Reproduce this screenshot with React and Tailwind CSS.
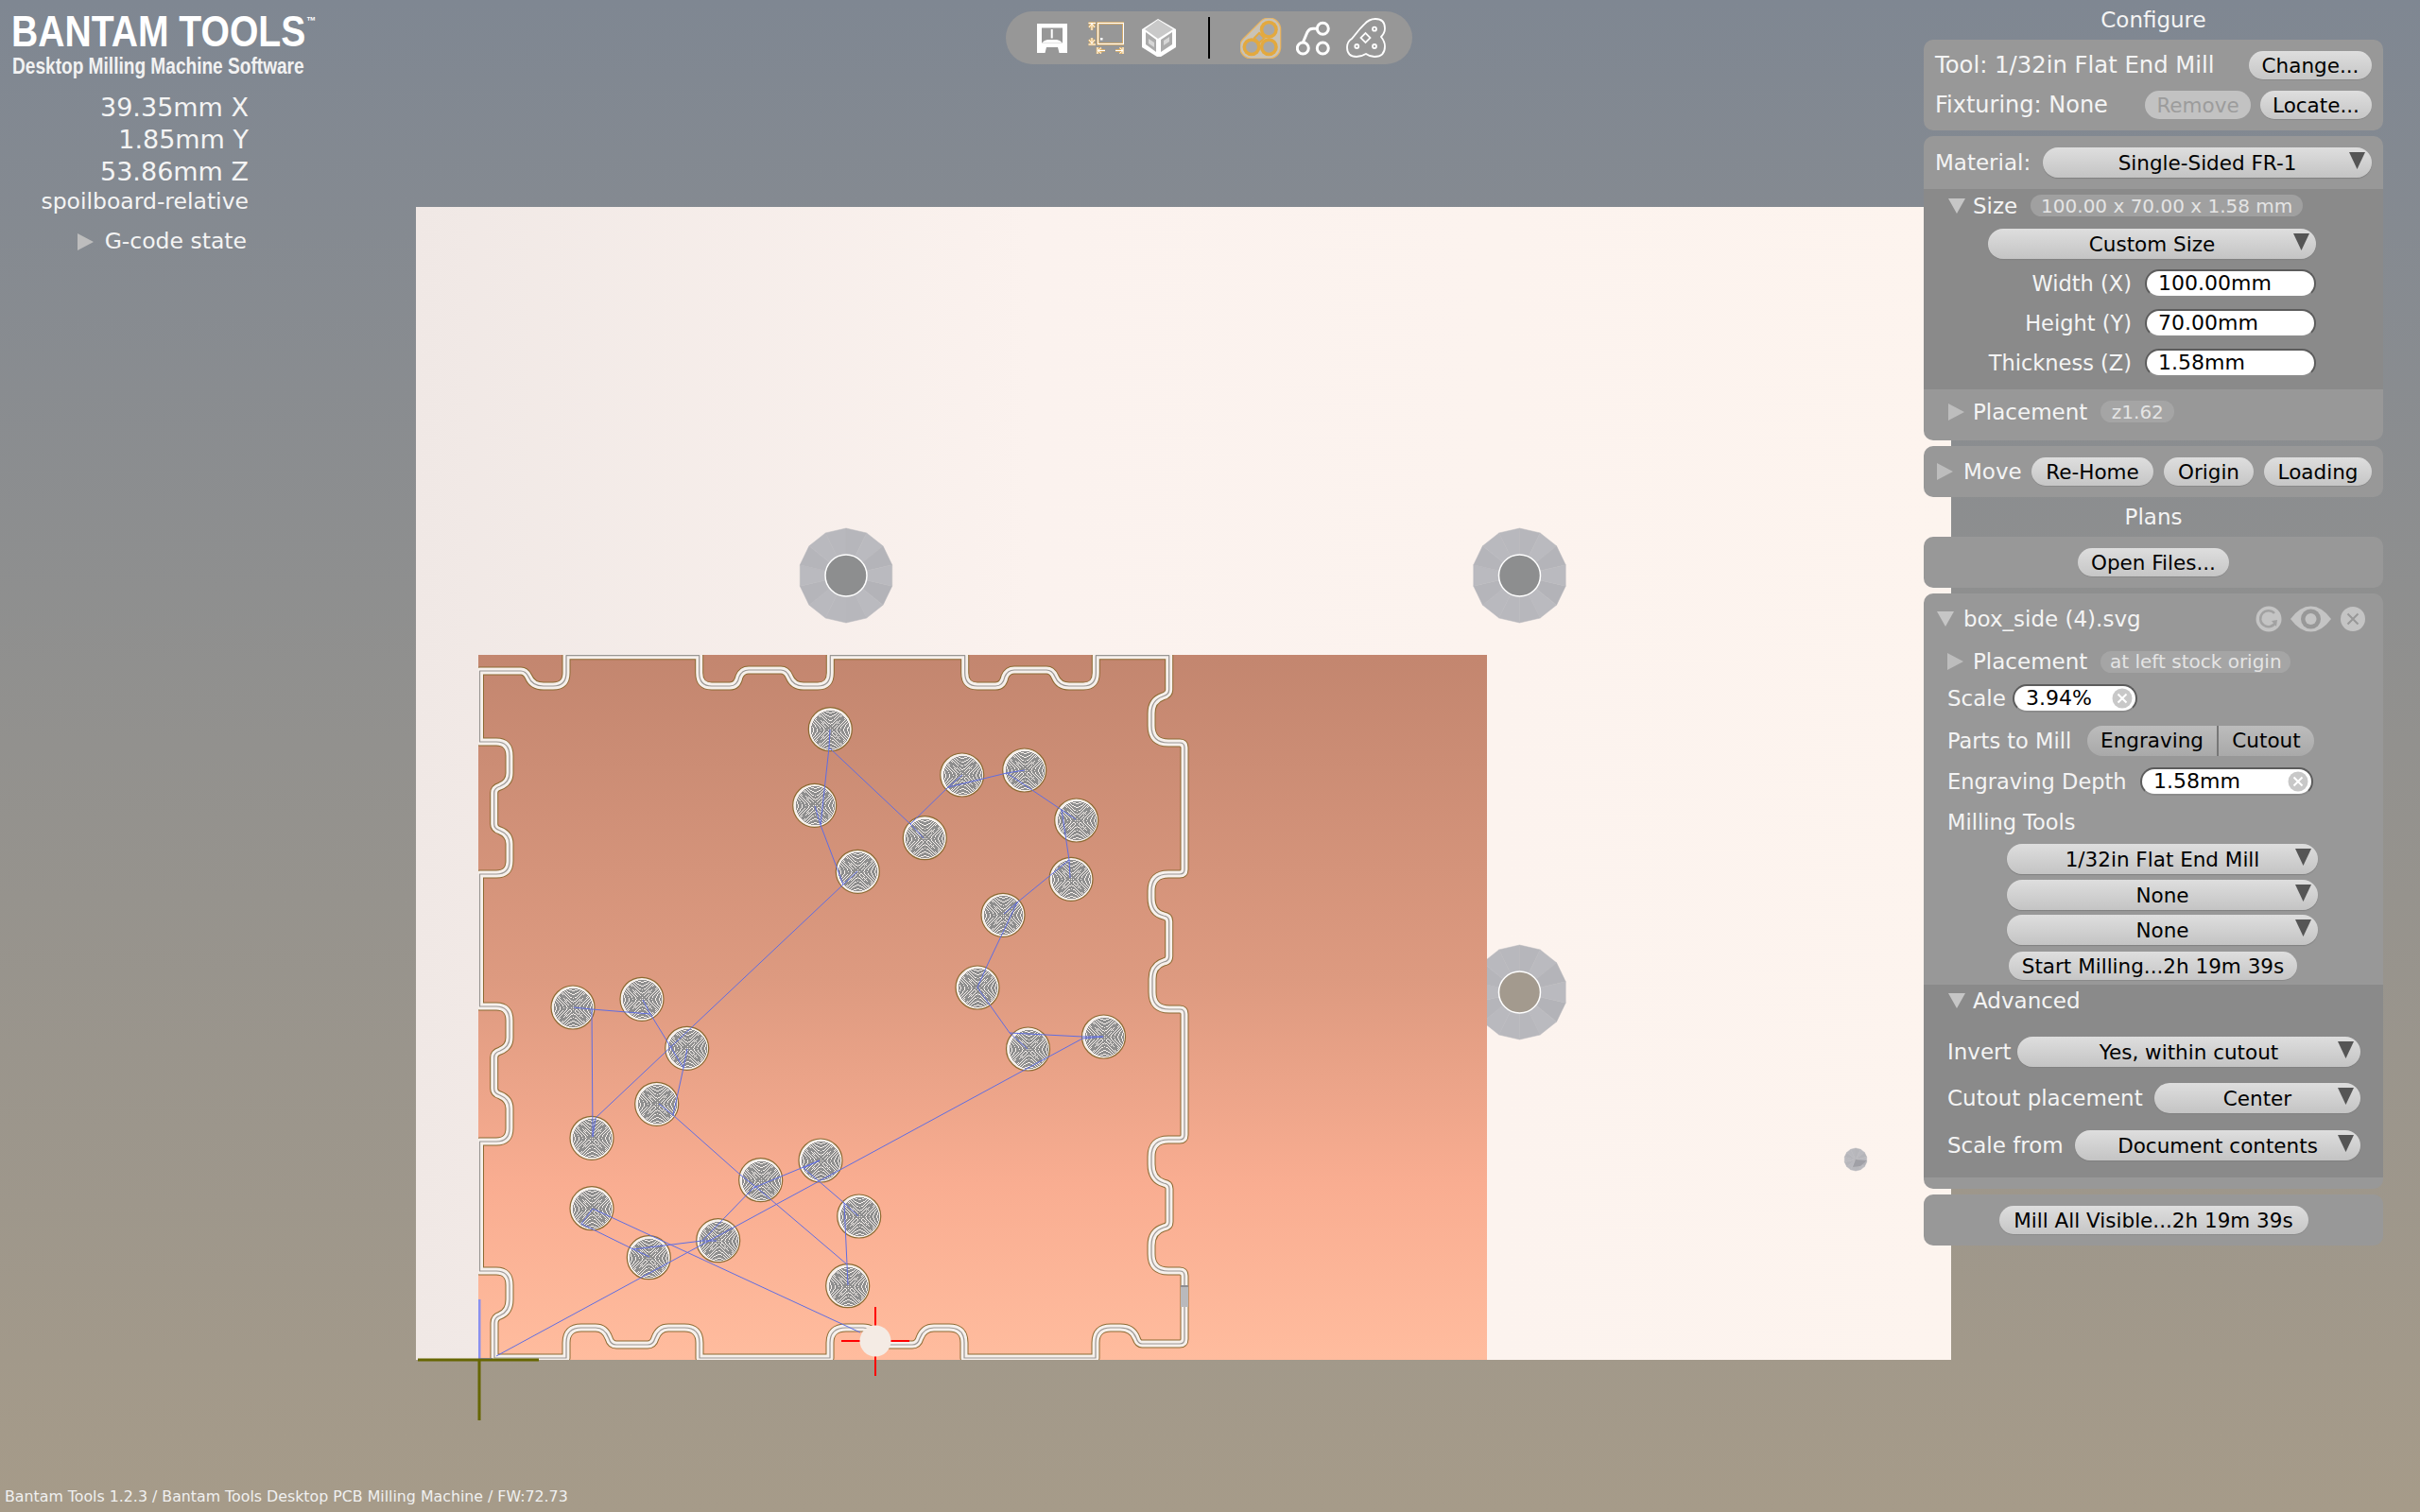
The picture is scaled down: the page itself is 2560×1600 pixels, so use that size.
const sans = "font-['DejaVu_Sans',sans-serif]";

const CUT_PATH =
  "M507.5 710 H551 Q556 710 559 716 Q563 726 575 726 H585 Q599 726 599 712 V693.7 H739.7 V712 Q739.7 726 753 726 H772 Q780 726 782 716 Q785 709 792 709 H826 Q832 709 835 716 Q839 726 850 726 H865 Q878.3 726 878.3 712 V693.7 H1020.7 V712 Q1020.7 726 1034 726 H1053 Q1061 726 1063 716 Q1066 709 1073 709 H1107 Q1113 709 1116 716 Q1120 726 1131 726 H1146 Q1159.3 726 1159.3 712 V693.7 H1236.7 V730 Q1236.7 735 1230 737 Q1218 741 1218 755 V768 Q1218 786 1236 786 H1248 Q1253 786 1253 791 V920 Q1253 925 1248 925 H1236 Q1218 925 1218 943 V950 Q1218 966 1231 969 Q1236.7 970 1236.7 975 V1012 Q1236.7 1017 1231 1018 Q1219 1022 1219 1036 V1050 Q1219 1068 1237 1068 H1248 Q1253 1068 1253 1073 V1201 Q1253 1206 1248 1206 H1236 Q1218 1206 1218 1224 V1232 Q1218 1248 1231 1252 Q1237 1253 1237 1258 V1293 Q1237 1298 1231 1299 Q1218 1303 1218 1318 V1327 Q1218 1345 1236 1345 H1248 Q1253 1345 1253 1350 V1417 Q1253 1422 1248 1422 H1208 Q1204 1422 1202 1416 Q1198 1405 1185 1405 H1175 Q1159 1405 1159 1421 V1437 H1020 V1421 Q1020 1405 1004 1405 H988 Q977 1405 973 1416 Q971 1423 965 1423 H936 Q930 1423 928 1416 Q924 1405 913 1405 H895 Q878 1405 878 1421 V1437 H740 V1421 Q740 1405 724 1405 H707 Q697 1405 693 1416 Q691 1423 685 1423 H652 Q646 1423 644 1416 Q640 1405 630 1405 H615 Q599 1405 599 1421 V1437 H523 V1400 Q523 1394 529 1392 Q539 1388 539 1375 V1360 Q539 1345 525 1345 H507.5 V1208 H525 Q539 1208 539 1194 V1173 Q539 1163 529 1159 Q522.7 1157 522.7 1152 V1119 Q522.7 1114 529 1112 Q539 1108 539 1098 V1080 Q539 1065 525 1065 H507.5 V925 H525 Q539 925 539 911 V893 Q539 883 529 879 Q522.7 877 522.7 872 V839 Q522.7 834 529 832 Q539 828 539 818 V800 Q539 785 525 785 H507.5 Z";

const HOLES = [
  [878.3, 771.7], [861.7, 852.3], [907.3, 922.3], [978.3, 886.7], [1017.7, 820], [1083.7, 815],
  [1138.7, 868], [1133, 930.3], [1061, 968.3], [1034, 1045], [1087.5, 1110], [1167.5, 1097],
  [606, 1066], [679, 1057.3], [726.7, 1109.3], [694.7, 1168.3], [626, 1204.3], [804.7, 1248.7],
  [868, 1228], [908.7, 1287], [896.7, 1360.7], [759.7, 1312.7], [686.3, 1330.7], [626, 1278.7],
];

// rapid moves between the holes
const TRAVEL = [
  "878,772 877,791 868,873 862,853",
  "877,791 963,872 977,887",
  "868,873 892,936 907,922",
  "892,936 630,1183 627,1203 626,1068 607,1066",
  "963,872 1003,833 1018,820",
  "1003,833 1065,818 1084,815",
  "1065,818 1123,857 1138,867",
  "1123,857 1131,910 1132,929",
  "1131,910 1076,955 1062,967",
  "1076,955 1045,1020 1034,1045",
  "1034,1045 1068,1093 1145,1097 1167,1097",
  "1068,1093 1087,1110",
  "525,1435 1145,1099 1167,1097",
  "626,1068 688,1073 680,1058",
  "688,1073 723,1130 727,1110",
  "723,1130 712,1180 697,1168",
  "712,1180 783,1243 802,1258 896,1338 897,1360",
  "896,1338 893,1273 908,1287",
  "893,1273 850,1236 867,1228 797,1257 743,1313 758,1313",
  "743,1313 670,1322 687,1330",
  "670,1322 615,1295 627,1279 910,1410",
];

const Bolt = ({ cx, cy, r, inner, hole }) => {
  const n = 14;
  const pts = Array.from({ length: n }, (_, i) => {
    const a = ((i + 0.5) / n) * Math.PI * 2;
    return [cx + Math.cos(a) * r, cy + Math.sin(a) * r];
  });
  return (
    <g>
      {pts.map((p, i) => {
        const q = pts[(i + 1) % n];
        const shade = 179 + Math.round(7 * Math.abs(Math.sin(i * 1.3)));
        return (
          <polygon
            key={i}
            points={`${cx},${cy} ${p[0]},${p[1]} ${q[0]},${q[1]}`}
            fill={`rgb(${shade},${shade},${shade + 5})`}
            stroke={`rgb(${shade},${shade},${shade + 5})`}
            strokeWidth="0.5"
          />
        );
      })}
      {inner && <circle cx={cx} cy={cy} r={inner} fill={hole} stroke="#fff" strokeWidth="1.5" />}
    </g>
  );
};

const Hole = ({ cx, cy }) => {
  const rings = [];
  for (let r = 20; r > 1; r -= 4 / 3) rings.push(r);
  const x = Math.round(cx) + 0.5;
  const y = Math.round(cy) + 0.5;
  return (
    <g>
      <circle cx={cx} cy={cy} r="23" fill="#f6f0ec" stroke="#8c6a32" strokeWidth="1.2" />
      {rings.map((r) => (
        <circle key={r} cx={x} cy={y} r={r} fill="none" stroke="#8e8e8e" strokeWidth="1" shapeRendering="crispEdges" />
      ))}
    </g>
  );
};

const Viewport = () => (
  <svg className="absolute inset-0" width="2560" height="1600" viewBox="0 0 2560 1600">
    <defs>
      <linearGradient id="board" x1="0" y1="0" x2="1" y2="0">
        <stop offset="0" stopColor="#f0e8e5" />
        <stop offset="0.4" stopColor="#fbf2ee" />
        <stop offset="1" stopColor="#fdf4ee" />
      </linearGradient>
      <linearGradient id="copper" x1="0" y1="0" x2="0" y2="1">
        <stop offset="0" stopColor="#c3866f" />
        <stop offset="0.46" stopColor="#dd9a80" />
        <stop offset="0.75" stopColor="#f9ad91" />
        <stop offset="1" stopColor="#ffbc9e" />
      </linearGradient>
      <clipPath id="stock">
        <rect x="506" y="693" width="1067" height="746" />
      </clipPath>
    </defs>
    <rect x="440" y="219" width="1624" height="1220" fill="url(#board)" />
    <Bolt cx={895} cy={609} r={50} inner={22} hole="#8d8e8f" />
    <Bolt cx={1607.5} cy={609} r={50} inner={22} hole="#8d8e8f" />
    <Bolt cx={1607.5} cy={1050} r={50} inner={22} hole="#a39a8e" />
    <Bolt cx={1963} cy={1227} r={12} />
    <polygon points="1963,1227 1975,1228 1968,1234 1960,1235" fill="#a0a0a6" />
    <rect x="506" y="693" width="1067" height="746" fill="url(#copper)" />
    <g clipPath="url(#stock)" fill="none" strokeLinejoin="round">
      <path d={CUT_PATH} stroke="#8c6a32" strokeWidth="9" />
      <path d={CUT_PATH} stroke="#f6f0ec" strokeWidth="7" />
      <path d={CUT_PATH} stroke="#999693" strokeWidth="1.2" />
    </g>
    <rect x="1249" y="1360" width="8" height="23" fill="#b9b9bc" />
    <rect x="1249" y="1360" width="8" height="2" fill="#8e8e92" />
    {HOLES.map(([cx, cy]) => (
      <Hole key={`${cx}-${cy}`} cx={cx} cy={cy} />
    ))}
    <g fill="none" stroke="#5f6de2" strokeWidth="1">
      {TRAVEL.map((p) => (
        <polyline key={p} points={p} />
      ))}
    </g>
    <rect x="506" y="1375" width="2.5" height="63" fill="#8b91ee" />
    <rect x="507" y="1437" width="14" height="1" fill="#8b91ee" />
    <rect x="442" y="1437.5" width="128" height="3" fill="#666600" />
    <rect x="505.5" y="1439" width="3" height="64" fill="#666600" />
    <rect x="925" y="1383" width="2" height="73" fill="#ff0000" />
    <rect x="890" y="1418" width="72" height="2" fill="#ff0000" />
    <circle cx="926" cy="1419" r="16.5" fill="#f4ebe4" />
  </svg>
);

const TriDown = ({ className = "" }) => (
  <svg className={className} width="18" height="16" viewBox="0 0 18 16">
    <polygon points="0,0 18,0 9,16" fill="#c6c6c6" />
  </svg>
);

const TriRight = ({ className = "" }) => (
  <svg className={className} width="17" height="18" viewBox="0 0 17 18">
    <polygon points="0,0 17,9 0,18" fill="#bdbdbd" />
  </svg>
);

const Btn = ({ className = "", muted, children }) => (
  <div
    className={`flex h-[30px] items-center justify-center rounded-full pt-[1px] text-[21.5px] ${
      muted
        ? "bg-[#c2c2c2] text-[#9c9c9c]"
        : "bg-gradient-to-b from-[#dedede] to-[#c6c6c6] text-black shadow-[0_1px_0_#8a8a8a]"
    } ${className}`}
  >
    {children}
  </div>
);

const Drop = ({ className = "", children }) => (
  <div className={`relative flex h-[32px] items-center justify-center rounded-full bg-gradient-to-b from-[#dedede] to-[#c4c4c4] pt-[1px] text-[21.5px] text-black shadow-[0_1px_1px_#808080] ${className}`}>
    {children}
    <svg className="absolute right-[7px] top-[5px]" width="17" height="18" viewBox="0 0 17 18">
      <polygon points="0,0 17,0 8.5,18" fill="#555555" />
    </svg>
  </div>
);

const ClearX = ({ className = "" }) => (
  <svg className={className} width="22" height="22" viewBox="0 0 22 22">
    <circle cx="11" cy="11" r="10.5" fill="#c8c8c8" />
    <path d="M6.5 6.5 L15.5 15.5 M15.5 6.5 L6.5 15.5" stroke="#ffffff" strokeWidth="2" />
  </svg>
);

const Field = ({ className = "", clear, children }) => (
  <div className={`relative flex h-[30px] items-center rounded-full border-2 border-[#5c5c5c] border-b-[#8c8c8c] bg-white pl-[12px] text-[22px] text-black ${className}`}>
    {children}
    {clear && <ClearX className="absolute right-[3px] top-[2px]" />}
  </div>
);

const Pill = ({ className = "", children }) => (
  <div className={`flex h-[23px] items-center justify-center rounded-full text-[20px] text-[#e4e4e4] ${className}`}>
    {children}
  </div>
);

const Panel = ({ className = "", children }) => (
  <div className={`overflow-hidden rounded-[10px] bg-[#989898] ${className}`}>{children}</div>
);

const Toolbar = () => (
  <div className="mt-[12px] flex h-[56px] w-[430px] items-center rounded-full bg-[#979797]">
    <svg className="ml-[33px]" width="32" height="31" viewBox="0 0 32 31">
      <rect width="32" height="31" fill="#fff" />
      <rect x="5" y="4.5" width="22" height="16" fill="#979797" />
      <rect x="14.7" y="6" width="2" height="9.5" fill="#fff" />
      <path d="M8.5 31 L10 25 H22 L23.5 31 Z" fill="#979797" />
      <path d="M5 20.5 Q8 17 11 17 H21 Q24 17 27 20.5 Z" fill="#fff" />
    </svg>
    <svg className="ml-[22px]" width="38" height="34" viewBox="0 0 38 34" fill="none">
      {[["#e6b566", 2.6], ["#ffffff", 1]].map(([c, w]) => (
        <g key={c} stroke={c} strokeWidth={w}>
          <rect x="10.5" y="1.5" width="27" height="22" />
          <path d="M0.5 1.5 H8 M4 2 V9 M1 6 L4 2 L7 6 M4 17 V23 M1 19 L4 23 L7 19 M0.5 24 H8" />
          <path d="M10 27 V34 M37 27 V34 M10.5 30.5 H18 M10.5 30.5 L14 27.5 M10.5 30.5 L14 33.5 M29 30.5 H37 M37 30.5 L33.5 27.5 M37 30.5 L33.5 33.5" />
        </g>
      ))}
      <rect x="13" y="17" width="2.5" height="2.5" fill="#fff" />
    </svg>
    <svg className="ml-[19px]" width="36" height="42" viewBox="0 0 36 42">
      <polygon points="17,1 36,12 36,31 20,41 16,41 0,31 0,12" fill="#fff" />
      <polygon points="17,2 33,12 17,22 3,12" fill="#c9c9c9" />
      <polygon points="4,15 15,23 15,36 4,28" fill="#ababab" />
      <polygon points="32,15 20,23 20,36 32,28" fill="#ababab" />
      <polygon points="7,22 13,26 13,31 7,27" fill="#d6d6d6" />
      <polygon points="29,20 23,24 23,29 29,25" fill="#d6d6d6" />
    </svg>
    <div className="ml-[34px] h-[44px] w-[2px] bg-black" />
    <svg className="ml-[32px]" width="44" height="43" viewBox="0 0 44 43">
      <path d="M30.3 12.3 L12 30.7 H30.3 Z" fill="#e7b35f" stroke="#e7b35f" strokeWidth="26" strokeLinejoin="round" />
      <path d="M30.3 12.3 L12 30.7 H30.3 Z" fill="#c9c3b7" stroke="#c9c3b7" strokeWidth="23.5" strokeLinejoin="round" />
      {[[30.3, 12.3], [12, 30.7], [30.3, 30.7]].map(([x, y]) => (
        <g key={x + y}>
          <circle cx={x} cy={y} r="9.5" fill="#e3a93f" />
          <circle cx={x} cy={y} r="6" fill="#a8a8a8" />
        </g>
      ))}
      <rect x="16.5" y="17.5" width="7.5" height="7.5" transform="rotate(45 20.3 21)" fill="#adadad" stroke="#e3a93f" strokeWidth="2" />
    </svg>
    <svg className="ml-[15px]" width="36" height="37" viewBox="0 0 36 37" fill="none" stroke="#fff" strokeWidth="3">
      <circle cx="28.3" cy="8.3" r="6" />
      <circle cx="7.3" cy="29" r="6" />
      <circle cx="28.3" cy="29" r="6" />
      <path d="M22 8.3 H18 Q14 8.3 12 12 L7.3 23" />
    </svg>
    <svg className="ml-[17px]" width="42" height="42" viewBox="0 0 42 42" fill="none" stroke="#fff" strokeWidth="1.8">
      <path d="M11 41 Q1 41 1 31 Q1 25 6 22 L15 11 Q17 9 19 7 Q24 1 31 1 Q41 1 41 11 Q41 16 37 20 Q41 25 41 30 Q41 41 30 41 Q25 41 21 38 Q16 41 11 41 Z" />
      <circle cx="30" cy="11.7" r="2" />
      <circle cx="11.3" cy="30" r="2" />
      <circle cx="30" cy="30" r="2" />
      <rect x="17" y="17.5" width="7" height="7" transform="rotate(45 20.5 21)" />
    </svg>
  </div>
);

const LeftColumn = () => (
  <div className="flex h-full w-[1064px] flex-col text-[#f4f4f4]">
    <div className="ml-[12px] mt-[17px] flex h-[33px] origin-left scale-x-[0.85] items-start font-['Liberation_Sans',sans-serif] text-[46px] font-bold leading-[33px] text-white">
      BANTAM TOOLS
      <span className="ml-[1px] text-[12px] leading-[10px]">™</span>
    </div>
    <div className="ml-[13px] mt-[10px] h-[20px] origin-left scale-x-[0.83] font-['Liberation_Sans',sans-serif] text-[23px] font-bold leading-[20px] text-[#f2f2f2]">
      Desktop Milling Machine Software
    </div>
    <div className={`mt-[17px] w-[263px] text-right text-[27px] leading-[34px] ${sans}`}>
      <div>39.35mm X</div>
      <div>1.85mm Y</div>
      <div>53.86mm Z</div>
      <div className="h-[28px] text-[23.5px] leading-[28px]">spoilboard-relative</div>
    </div>
    <div className={`mt-[15px] flex h-[28px] w-[261px] items-center justify-end text-[23.5px] ${sans}`}>
      <TriRight className="mr-[12px]" />
      G-code state
    </div>
    <div className={`mb-[6px] ml-[5px] mt-auto text-[15.8px] leading-[20px] text-[#f0f0f0] ${sans}`}>
      Bantam Tools 1.2.3 / Bantam Tools Desktop PCB Milling Machine / FW:72.73
    </div>
  </div>
);

const RightColumn = () => (
  <div className={`ml-auto mr-[39px] w-[486px] text-[23px] leading-[30px] text-[#f4f4f4] ${sans}`}>
    <div className="flex h-[42px] items-center justify-center">Configure</div>

    <Panel className="h-[96px] px-[12px] pt-[12px]">
      <div className="flex h-[30px] items-center justify-between">
        <span className="text-[24.3px]">Tool: 1/32in Flat End Mill</span>
        <Btn className="w-[130px]">Change...</Btn>
      </div>
      <div className="mt-[12px] flex h-[30px] items-center">
        <span className="text-[24px]">Fixturing: None</span>
        <Btn muted className="ml-auto w-[112px]">Remove</Btn>
        <Btn className="ml-[10px] w-[118px]">Locate...</Btn>
      </div>
    </Panel>

    <Panel className="mt-[6px]">
      <div className="flex h-[56px] items-start pl-[12px] pr-[12px] pt-[12px]">
        <span className="flex h-[32px] items-center">Material:</span>
        <Drop className="ml-auto w-[348px]">Single-Sided FR-1</Drop>
      </div>
      <div className="h-[212px] bg-[#8a8a8a] pt-[6px]">
        <div className="flex h-[23px] items-center pl-[26px]">
          <TriDown />
          <span className="ml-[8px]">Size</span>
          <Pill className="ml-[14px] w-[288px] bg-[#a0a0a0]">100.00 x 70.00 x 1.58 mm</Pill>
        </div>
        <Drop className="ml-[68px] mt-[13px] w-[347px]">Custom Size</Drop>
        {[
          ["Width (X)", "100.00mm", "mt-[11px]"],
          ["Height (Y)", "70.00mm", "mt-[12px]"],
          ["Thickness (Z)", "1.58mm", "mt-[12px]"],
        ].map(([label, value, gap]) => (
          <div key={label} className={`flex items-center ${gap}`}>
            <span className="w-[220px] text-right text-[22.5px]">{label}</span>
            <Field className="ml-[14px] w-[181px]">{value}</Field>
          </div>
        ))}
      </div>
      <div className="flex h-[54px] items-start pl-[26px] pt-[12px]">
        <span className="flex h-[23px] items-center">
          <TriRight />
          <span className="ml-[9px]">Placement</span>
        </span>
        <Pill className="ml-[14px] w-[78px] bg-[#a5a5a5]">z1.62</Pill>
      </div>
    </Panel>

    <Panel className="mt-[6px] flex h-[54px] items-center pl-[14px] pr-[12px]">
      <TriRight />
      <span className="ml-[11px]">Move</span>
      <Btn className="ml-auto w-[129px]">Re-Home</Btn>
      <Btn className="ml-[11px] w-[95px]">Origin</Btn>
      <Btn className="ml-[11px] w-[114px]">Loading</Btn>
    </Panel>

    <div className="flex h-[42px] items-center justify-center">Plans</div>

    <Panel className="flex h-[54px] items-center justify-center">
      <Btn className="w-[160px]">Open Files...</Btn>
    </Panel>

    <Panel className="mt-[6px]">
      <div className="flex h-[54px] items-center pl-[14px]">
        <TriDown />
        <span className="ml-[10px]">box_side (4).svg</span>
        <svg className="ml-auto" width="28" height="28" viewBox="0 0 28 28" fill="none">
          <circle cx="14" cy="14" r="13.5" fill="#c4c4c4" />
          <path d="M21 18 A8.5 8.5 0 1 1 20 8" stroke="#a2a2a2" strokeWidth="2.5" />
          <path d="M17 16 L23 15 L22 22 Z" fill="#a2a2a2" />
        </svg>
        <svg className="ml-[9px]" width="43" height="28" viewBox="0 0 43 28">
          <path d="M0 14 Q10 0.5 21.5 0.5 Q33 0.5 43 14 Q33 27.5 21.5 27.5 Q10 27.5 0 14 Z" fill="#c4c4c4" />
          <circle cx="21.5" cy="14" r="10.5" fill="#989898" />
          <circle cx="21.5" cy="14" r="6" fill="#c4c4c4" />
        </svg>
        <svg className="ml-[9px] mr-[18px]" width="28" height="28" viewBox="0 0 28 28">
          <circle cx="14" cy="14" r="13" fill="#c4c4c4" />
          <path d="M8.5 8.5 L19.5 19.5 M19.5 8.5 L8.5 19.5" stroke="#989898" strokeWidth="2" />
        </svg>
      </div>
      <div className="mt-[6px] flex h-[24px] items-center pl-[25px]">
        <TriRight />
        <span className="ml-[10px]">Placement</span>
        <Pill className="ml-[14px] w-[201px] bg-[#a5a5a5]">at left stock origin</Pill>
      </div>
      <div className="mt-[12px] flex items-center pl-[25px]">
        <span className="w-[70px]">Scale</span>
        <Field className="ml-[-1px] w-[132px]" clear>3.94%</Field>
      </div>
      <div className="mt-[14px] flex h-[32px] items-center pl-[25px]">
        <span className="w-[148px] text-[22.5px]">Parts to Mill</span>
        <div className="flex h-[32px] w-[240px] overflow-hidden rounded-full bg-gradient-to-b from-[#bcbcbc] to-[#a9a9a9] text-[21.5px] text-black">
          <div className="flex w-[137px] items-center justify-center">Engraving</div>
          <div className="w-[2px] bg-[#777777]" />
          <div className="flex flex-1 items-center justify-center">Cutout</div>
        </div>
      </div>
      <div className="mt-[12px] flex items-center pl-[25px]">
        <span className="w-[204px] text-[22.5px]">Engraving Depth</span>
        <Field className="w-[183px]" clear>1.58mm</Field>
      </div>
      <div className="mt-[13px] h-[30px] pl-[25px] text-[22.5px]">Milling Tools</div>
      <Drop className="ml-[88px] mt-[8px] w-[329px]">1/32in Flat End Mill</Drop>
      <Drop className="ml-[88px] mt-[6px] w-[329px]">None</Drop>
      <Drop className="ml-[88px] mt-[5px] w-[329px]">None</Drop>
      <Btn className="ml-[90px] mt-[7px] w-[305px]">Start Milling...2h 19m 39s</Btn>
      <div className="mt-[5px] h-[204px] bg-[#8a8a8a]">
        <div className="flex h-[34px] items-center pl-[26px]">
          <TriDown />
          <span className="ml-[8px]">Advanced</span>
        </div>
        <div className="mt-[21px] flex items-center pl-[25px] pr-[24px]">
          <span>Invert</span>
          <Drop className="ml-auto w-[363px]">Yes, within cutout</Drop>
        </div>
        <div className="mt-[17px] flex items-center pl-[25px] pr-[24px]">
          <span>Cutout placement</span>
          <Drop className="ml-auto w-[218px]">Center</Drop>
        </div>
        <div className="mt-[18px] flex items-center pl-[25px] pr-[24px]">
          <span>Scale from</span>
          <Drop className="ml-auto w-[302px]">Document contents</Drop>
        </div>
      </div>
      <div className="h-[12px]" />
    </Panel>

    <Panel className="mt-[6px] flex h-[54px] items-center justify-center">
      <Btn className="w-[327px]">Mill All Visible...2h 19m 39s</Btn>
    </Panel>
  </div>
);

export default function App() {
  return (
    <div className="relative flex h-[1600px] w-[2560px] overflow-hidden bg-gradient-to-b from-[#7f8792] to-[#a69b89]">
      <Viewport />
      <div className="relative flex h-full w-full">
        <LeftColumn />
        <Toolbar />
        <RightColumn />
      </div>
    </div>
  );
}
